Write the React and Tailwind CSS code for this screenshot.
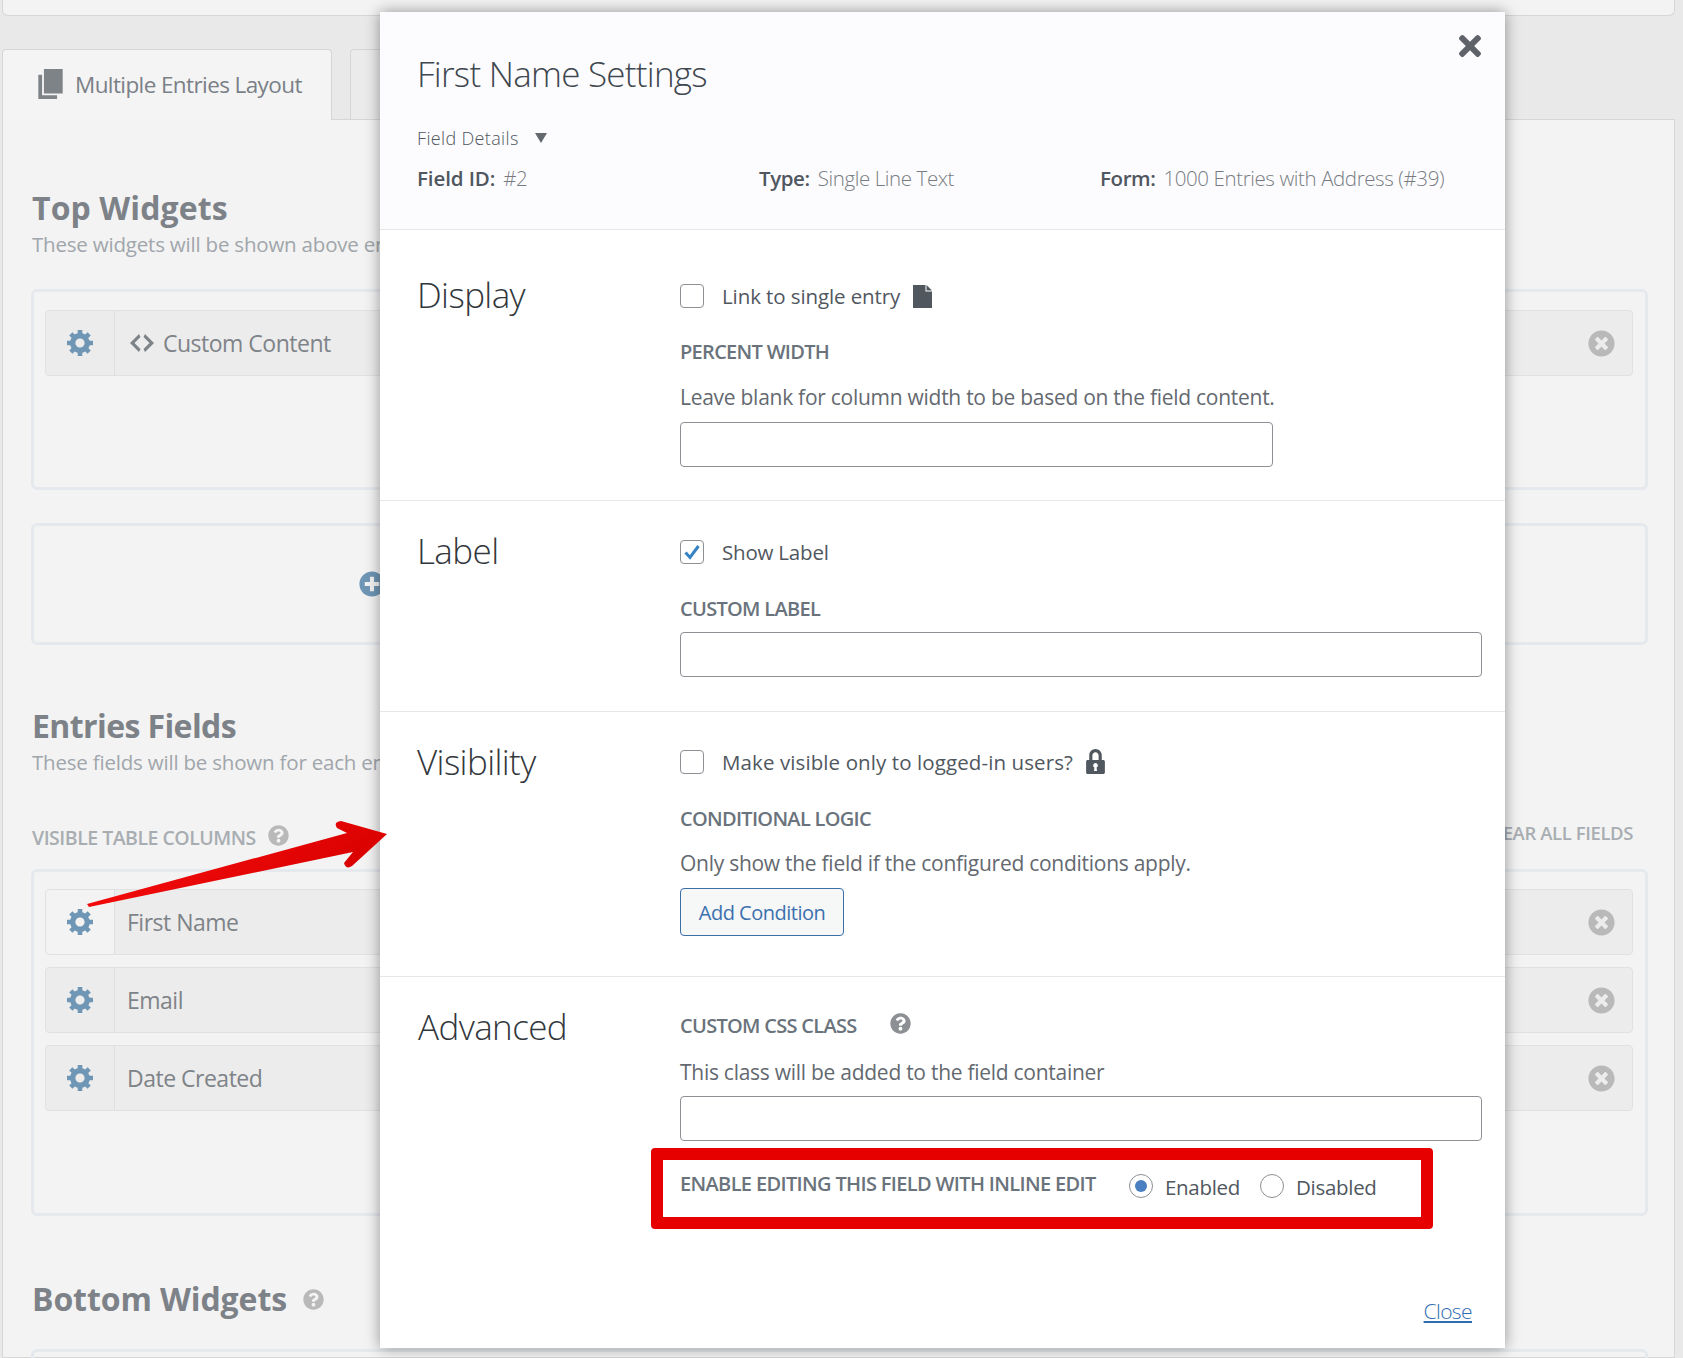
import React from "react";
import { FaTimes, FaTimesCircle, FaQuestionCircle, FaPlusCircle } from "react-icons/fa";

const GEAR = "M18 12h-2.18c-.17.7-.44 1.35-.81 1.93l1.54 1.54-2.1 2.1-1.54-1.54c-.58.36-1.23.63-1.91.79V19H8v-2.18c-.68-.16-1.33-.43-1.91-.79l-1.54 1.54-2.12-2.12 1.54-1.54c-.36-.58-.63-1.23-.79-1.91H1V9.03h2.17c.16-.7.44-1.35.8-1.94L2.43 5.55l2.1-2.1 1.54 1.54c.58-.37 1.24-.64 1.93-.81V2h3v2.18c.68.16 1.33.43 1.91.79l1.54-1.54 2.12 2.12-1.54 1.54c-.36.59.64 1.24.8 1.94H18V12zm-8.5 1.5c1.66 0 3-1.34 3-3s-1.34-3-3-3-3 1.34-3 3 1.34 3 3 3z";

function Gear() {
  return (
    <svg viewBox="1 2 17 17" className="w-[26px] h-[26px] fill-[#6f96b5]">
      <path d={GEAR} />
    </svg>
  );
}

function Item({ label, code, light }) {
  return (
    <div className="h-[66px] flex items-stretch rounded border border-[#dfe1e3] bg-[#ececec] overflow-hidden">
      <div className={"w-[69px] flex items-center justify-center border-r border-[#dcdee0] " + (light ? "bg-[#f3f3f3]" : "")}>
        <Gear />
      </div>
      <div className="flex-1 flex items-center pl-[12px] pr-[17px] text-[#7e8388] text-[23px] tracking-[-0.5px]">
        {code && (
          <svg viewBox="2 4 16 12" className="w-[24px] h-[18px] fill-[#7e8388] mr-[9px] ml-[3px]">
            <path d="M9 6l-4 4 4 4-1 2-6-6 6-6zm2 8l4-4-4-4 1-2 6 6-6 6z" />
          </svg>
        )}
        <span className="flex-1">{label}</span>
        <FaTimesCircle className="w-[27px] h-[27px] text-[#b9b9b9]" />
      </div>
    </div>
  );
}

function Box({ className, children }) {
  return (
    <div className={"border-[3px] border-[#e5e9ed] rounded-md pl-[11px] pr-[12px] flex flex-col gap-[12px] " + className}>
      {children}
    </div>
  );
}

function Check({ checked }) {
  return (
    <span className="w-[24px] h-[24px] rounded border border-[#8c8f94] bg-white flex items-center justify-center shrink-0">
      {checked && (
        <svg viewBox="0 0 20 20" className="w-[20px] h-[20px]">
          <path d="M3.5 10.5l4.5 5L16.5 4" fill="none" stroke="#3582c4" strokeWidth="3" />
        </svg>
      )}
    </span>
  );
}

function Caps({ children, className = "" }) {
  return <div className={"h-5 flex items-center font-semibold text-[20px] tracking-[-0.7px] text-[#6a737c] " + className}>{children}</div>;
}

function Desc({ children, className = "" }) {
  return <div className={"h-6 flex items-center text-[21px] tracking-[-0.27px] text-[#646970] " + className}>{children}</div>;
}

function TextInput({ className = "" }) {
  return <div className={"h-[45px] rounded border border-[#8c8f94] bg-white " + className} />;
}

function Section({ title, top, className = "", children }) {
  return (
    <div className={"flex pl-[38px] pr-[23px] border-b border-[#e6e7e9] " + className}>
      <div className={"w-[262px] -ml-[1px] mr-[1px] text-[35px] leading-[48px] font-light tracking-[-0.6px] text-[#32373c] " + top}>{title}</div>
      <div className="flex-1 flex flex-col">{children}</div>
    </div>
  );
}

function Radio({ on, label }) {
  return (
    <span className="flex items-center">
      <span className="w-[24px] h-[24px] rounded-full border border-[#8c8f94] bg-white flex items-center justify-center">
        {on && <span className="w-[12px] h-[12px] rounded-full bg-[#4a7fc1]" />}
      </span>
      <span className="ml-[12px] text-[20.5px] tracking-[-0.3px] text-[#50575e] translate-y-[1px]">{label}</span>
    </span>
  );
}

export default function App() {
  return (
    <div className="relative w-[1683px] h-[1358px] overflow-hidden bg-[#e9e9e9] font-['Open_Sans','Noto_Sans',sans-serif]">
      <div className="ml-[2px] w-[1673px] h-[16px] bg-[#f3f3f3] border border-t-0 border-[#d6d6d6] rounded-b-md" />

      <div className="mt-[33px] h-[70px] flex pl-[2px] relative z-10">
        <div className="w-[330px] h-[71px] flex items-center pl-[35px] bg-[#f4f4f4] border border-b-0 border-[#d6d6d6] rounded-t">
          <svg viewBox="3 2 13 16" className="w-[25px] h-[30px] fill-[#7e8388] mr-[12px] -translate-y-[1px]">
            <path d="M6 15V2h10v13H6zm-1 1h8v2H3V5h2v11z" />
          </svg>
          <span className="text-[22.5px] tracking-[-0.6px] text-[#7a8087]">Multiple Entries Layout</span>
        </div>
        <div className="ml-[18px] w-[200px] h-[70px] bg-[#ebebeb] border border-b-0 border-[#d6d6d6] rounded-t" />
      </div>

      <div className="ml-[2px] w-[1673px] h-[1239px] bg-[#f3f3f3] border border-[#d6d6d6] pl-[28px] pr-[26px]">
        <h2 className="mt-[68px] h-[40px] flex items-center pl-[1px] text-[32px] font-bold tracking-[0.1px] text-[#7d8288]">Top Widgets</h2>
        <p className="mt-[4px] h-6 flex items-center pl-[1px] text-[20.5px] tracking-[-0.2px] text-[#a0a6ab] whitespace-nowrap">These widgets will be shown above entries.</p>
        <Box className="mt-[33px] h-[201px] pt-[18px]">
          <Item label="Custom Content" code />
        </Box>
        <div className="mt-[33px] h-[122px] border-[3px] border-[#e5e9ed] rounded-md flex items-center pl-[325px]">
          <FaPlusCircle className="w-[26px] h-[26px] text-[#6f96b5]" />
        </div>

        <h2 className="mt-[61px] h-[40px] flex items-center pl-[1px] text-[32px] font-bold tracking-[-0.6px] text-[#7d8288]">Entries Fields</h2>
        <p className="mt-[4px] h-6 flex items-center pl-[1px] text-[20.5px] tracking-[-0.2px] text-[#a0a6ab] whitespace-nowrap">These fields will be shown for each entry.</p>
        <div className="mt-[52px] h-6 flex items-center justify-between pl-[1px] pr-[15px]">
          <span className="flex items-center text-[19.5px] font-semibold tracking-[-0.5px] text-[#a8adb2]">
            VISIBLE TABLE COLUMNS
            <FaQuestionCircle className="ml-[12px] w-[21px] h-[21px] text-[#b9b9b9] -translate-y-[3px]" />
          </span>
          <span className="-translate-y-[5px] text-[18.5px] font-semibold tracking-[-0.4px] text-[#a8adb2]">CLEAR ALL FIELDS</span>
        </div>
        <Box className="mt-[19px] h-[347px] pt-[17px]">
          <Item label="First Name" light />
          <Item label="Email" />
          <Item label="Date Created" />
        </Box>

        <h2 className="mt-[63px] h-[40px] flex items-center pl-[1px] text-[32px] font-bold tracking-[-0.1px] text-[#7d8288]">
          Bottom Widgets
          <FaQuestionCircle className="ml-[16px] w-[21px] h-[21px] text-[#b9b9b9]" />
        </h2>
        <div className="mt-[30px] h-[40px] border-[3px] border-[#e5e9ed] rounded-md" />
      </div>

      <div className="absolute z-20 left-[380px] top-[12px] w-[1125px] h-[1336px] bg-white shadow-[0_0_14px_rgba(0,0,0,0.4)] flex flex-col">
        <FaTimes className="absolute right-[19px] top-[18px] w-[32px] h-[32px] text-[#5f6369]" />

        <div className="h-[218px] shrink-0 bg-[#fcfcfe] border-b border-[#e6e7e9] pl-[38px] pr-[23px]">
          <h1 className="-ml-[1px] pt-[42px] h-[78px] text-[35px] leading-[40px] font-light tracking-[-0.75px] text-[#3f4750]">First Name Settings</h1>
          <div className="-ml-[1px] mt-[38px] h-5 flex items-center text-[18px] font-light tracking-[0.35px] text-[#50575e]">
            Field Details
            <span className="ml-[16px] w-0 h-0 border-l-[6px] border-r-[6px] border-t-[10px] border-l-transparent border-r-transparent border-t-[#646970]" />
          </div>
          <div className="mt-[15px] grid grid-cols-[341px_342px_1fr] text-[20.5px] tracking-[-0.4px] text-[#787c82] font-light">
            <div className="whitespace-nowrap -ml-[1px]"><b className="font-semibold text-[#50575e] mr-[8px] tracking-[-0.1px]">Field ID:</b>#2</div>
            <div className="whitespace-nowrap"><b className="font-semibold text-[#50575e] mr-[8px]">Type:</b>Single Line Text</div>
            <div className="whitespace-nowrap -ml-[1px]"><b className="font-semibold text-[#50575e] mr-[8px]">Form:</b>1000 Entries with Address (#39)</div>
          </div>
        </div>

        <Section title="Display" top="pt-[41px]" className="h-[271px] shrink-0">
          <label className="mt-[54px] h-[24px] flex items-center">
            <Check />
            <span className="ml-[18px] text-[20.5px] tracking-[-0.1px] text-[#50575e]">Link to single entry</span>
            <svg viewBox="0 0 19 23" className="ml-[13px] w-[19px] h-[23px] fill-[#50575e]">
              <path d="M0 0h12.5v6.5H19V23H0z" />
              <path d="M13.5 0L19 5.5h-5.5z" />
            </svg>
          </label>
          <Caps className="mt-[34px]">PERCENT WIDTH</Caps>
          <Desc className="mt-[24px]">Leave blank for column width to be based on the field content.</Desc>
          <TextInput className="mt-[12px] w-[593px]" />
        </Section>

        <Section title="Label" top="pt-[26px]" className="h-[211px] shrink-0">
          <label className="mt-[39px] h-[24px] flex items-center">
            <Check checked />
            <span className="ml-[18px] text-[20.5px] tracking-[-0.2px] text-[#50575e]">Show Label</span>
          </label>
          <Caps className="mt-[35px]">CUSTOM LABEL</Caps>
          <TextInput className="mt-[13px]" />
        </Section>

        <Section title="Visibility" top="pt-[26px]" className="h-[265px] shrink-0">
          <label className="mt-[38px] h-[24px] flex items-center">
            <Check />
            <span className="ml-[18px] text-[20.5px] tracking-[0.1px] text-[#50575e]">Make visible only to logged-in users?</span>
            <svg viewBox="4 2 12 16" className="ml-[13px] w-[19px] h-[25px] fill-[#50575e] -translate-y-[1px]">
              <path d="M14 9h1c.55 0 1 .45 1 1v7c0 .55-.45 1-1 1H5c-.55 0-1-.45-1-1v-7c0-.55.45-1 1-1h1V6c0-2.21 1.79-4 4-4s4 1.79 4 4v3zm-2 0V6c0-1.1-.9-2-2-2s-2 .9-2 2v3h4zm-1 7l-.36-2.15c.51-.24.86-.75.86-1.35 0-.83-.67-1.5-1.5-1.5s-1.5.67-1.5 1.5c0 .6.35 1.11.86 1.35L9 16h2z" />
            </svg>
          </label>
          <Caps className="mt-[35px]">CONDITIONAL LOGIC</Caps>
          <Desc className="mt-[23px]">Only show the field if the configured conditions apply.</Desc>
          <button className="mt-[12px] w-[164px] h-[48px] rounded border border-[#3c6fa8] bg-[#f6f7f7] text-[20px] tracking-[-0.5px] text-[#3c70ae] pt-[1px]">Add Condition</button>
        </Section>

        <div className="flex-1 flex pl-[38px] pr-[23px] relative">
          <div className="w-[262px] pt-[26px] text-[35px] leading-[48px] font-light tracking-[-0.6px] text-[#32373c]">Advanced</div>
          <div className="flex-1 flex flex-col">
            <Caps className="mt-[39px]">
              CUSTOM CSS CLASS
              <FaQuestionCircle className="ml-[33px] w-[21px] h-[21px] text-[#8c8f94] -translate-y-[3px]" />
            </Caps>
            <Desc className="mt-[25px]">This class will be added to the field container</Desc>
            <TextInput className="mt-[11px]" />
            <div className="mt-[7px] -ml-[29px] w-[782px] h-[81px] rounded border-[12px] border-[#e60000] pl-[17px] flex items-center">
              <span className="font-semibold text-[20px] tracking-[-0.65px] text-[#6a737c] whitespace-nowrap -translate-y-[5px]">ENABLE EDITING THIS FIELD WITH INLINE EDIT</span>
              <span className="flex items-center gap-[20px] absolute left-[749px] top-[194px]">
                <Radio on label="Enabled" />
                <Radio label="Disabled" />
              </span>
            </div>
            <a className="mt-[67px] self-end mr-[10px] text-[21px] font-light tracking-[-0.6px] underline text-[#2f6db3]">Close</a>
          </div>
        </div>
      </div>

      <svg className="absolute z-30 left-0 top-0 pointer-events-none" width="400" height="920" viewBox="0 0 400 920">
        <defs>
          <linearGradient id="arrowRed" x1="0" y1="0" x2="1" y2="0.4">
            <stop offset="0" stopColor="#ff1010" />
            <stop offset="1" stopColor="#d80000" />
          </linearGradient>
        </defs>
        <path
          d="M87 904 L347 833 L337 828 Q333 822 341 821 L387 834 L352 866 Q346 870 344 863 L353 852 L89 907 Z"
          fill="url(#arrowRed)"
        />
      </svg>
    </div>
  );
}
